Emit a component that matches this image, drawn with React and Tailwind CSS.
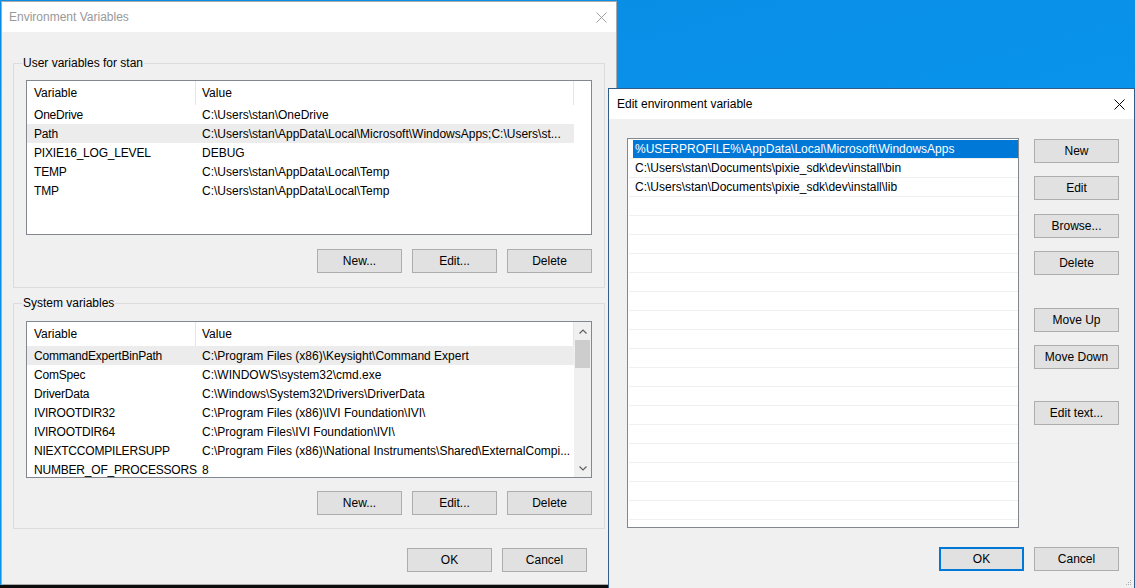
import React from 'react';

const userVars = [
  ['OneDrive', 'C:\\Users\\stan\\OneDrive'],
  ['Path', 'C:\\Users\\stan\\AppData\\Local\\Microsoft\\WindowsApps;C:\\Users\\st...'],
  ['PIXIE16_LOG_LEVEL', 'DEBUG'],
  ['TEMP', 'C:\\Users\\stan\\AppData\\Local\\Temp'],
  ['TMP', 'C:\\Users\\stan\\AppData\\Local\\Temp'],
];

const systemVars = [
  ['CommandExpertBinPath', 'C:\\Program Files (x86)\\Keysight\\Command Expert'],
  ['ComSpec', 'C:\\WINDOWS\\system32\\cmd.exe'],
  ['DriverData', 'C:\\Windows\\System32\\Drivers\\DriverData'],
  ['IVIROOTDIR32', 'C:\\Program Files (x86)\\IVI Foundation\\IVI\\'],
  ['IVIROOTDIR64', 'C:\\Program Files\\IVI Foundation\\IVI\\'],
  ['NIEXTCCOMPILERSUPP', 'C:\\Program Files (x86)\\National Instruments\\Shared\\ExternalCompi...'],
  ['NUMBER_OF_PROCESSORS', '8'],
];

const pathEntries = [
  '%USERPROFILE%\\AppData\\Local\\Microsoft\\WindowsApps',
  'C:\\Users\\stan\\Documents\\pixie_sdk\\dev\\install\\bin',
  'C:\\Users\\stan\\Documents\\pixie_sdk\\dev\\install\\lib',
];

function Btn({ children, primary }) {
  return (
    <div
      className={
        primary
          ? 'flex items-center justify-center h-[24px] w-[85px] bg-[#e1e1e1] border-2 border-[#0078d7] text-black'
          : 'flex items-center justify-center h-[24px] w-[85px] bg-[#e1e1e1] border border-[#adadad] text-black'
      }
    >
      {children}
    </div>
  );
}

function CloseX({ color }) {
  return (
    <svg width="11" height="11" viewBox="0 0 11 11">
      <path d="M0.5 0.5 L10.5 10.5 M10.5 0.5 L0.5 10.5" stroke={color} strokeWidth="1" fill="none" />
    </svg>
  );
}

function Chevron({ up }) {
  return (
    <svg width="8" height="5" viewBox="0 0 8 5">
      <path
        d={up ? 'M0.5 4.5 L4 1 L7.5 4.5' : 'M0.5 0.5 L4 4 L7.5 0.5'}
        stroke="#606060"
        strokeWidth="1.2"
        fill="none"
      />
    </svg>
  );
}

function VarList({ rows, height, scrollbar }) {
  return (
    <div className={`${height} w-[566px] border border-[#828790] bg-white flex overflow-hidden`}>
      <div className="w-[547px] flex flex-col">
        <div className="flex h-[24px] shrink-0">
          <div className="w-[169px] pl-[7px] flex items-center border-r border-[#e5e5e5]">Variable</div>
          <div className="w-[378px] pl-[6px] flex items-center border-r border-[#e5e5e5]">Value</div>
        </div>
        {rows.map(([name, value], i) => (
          <div key={name} className={`flex h-[19px] shrink-0 items-center ${i === (scrollbar ? 0 : 1) ? 'bg-[#ececec]' : ''}`}>
            <div className="w-[169px] pl-[7px] whitespace-nowrap tracking-[-0.2px]">{name}</div>
            <div className="w-[378px] pl-[6px] whitespace-nowrap overflow-hidden">{value}</div>
          </div>
        ))}
      </div>
      {scrollbar ? (
        <div className="w-[17px] bg-[#f0f0f0] flex flex-col">
          <div className="h-[18px] flex items-center justify-center">
            <Chevron up />
          </div>
          <div className="h-[28px] mx-[1px] bg-[#cdcdcd]" />
          <div className="flex-1" />
          <div className="h-[17px] flex items-center justify-center">
            <Chevron />
          </div>
        </div>
      ) : (
        <div className="w-[17px]" />
      )}
    </div>
  );
}

function GroupBox({ label, children, className }) {
  return (
    <div className={`relative w-[592px] border border-[#dcdcdc] px-[12px] ${className}`}>
      <span className="absolute left-[8px] -top-[9px] px-[1px] bg-[#f0f0f0] leading-[16px]">{label}</span>
      {children}
    </div>
  );
}

function ButtonRow({ className }) {
  return (
    <div className={`flex justify-end gap-[10px] ${className}`}>
      <Btn>New...</Btn>
      <Btn>Edit...</Btn>
      <Btn>Delete</Btn>
    </div>
  );
}

export default function App() {
  return (
    <div className="relative w-[1135px] h-[588px] overflow-hidden bg-[linear-gradient(165deg,#0a8be4_0%,#0995ec_55%,#0a8fe6_100%)] text-[12px] text-black font-['Segoe_UI','Liberation_Sans',Arial,sans-serif]">
      {/* window behind, peeking out at the bottom */}
      <div className="absolute left-0 top-[585px] w-[618px] h-[3px] bg-[#0c0c0c]" />

      {/* Environment Variables (inactive) */}
      <div className="absolute left-[1px] top-[1px] w-[616px] h-[584px] border border-[#aaaaaa] bg-[#f0f0f0] flex flex-col">
        <div className="h-[30px] bg-white flex items-center justify-between pl-[7px] pr-[9px] shrink-0">
          <span className="text-[#999999]">Environment Variables</span>
          <CloseX color="#a0a0a0" />
        </div>
        <div className="flex flex-col pl-[11px]">
          <GroupBox label="User variables for stan" className="mt-[31px] pt-[16px] pb-[14px]">
            <VarList rows={userVars} height="h-[155px]" />
            <ButtonRow className="mt-[14px]" />
          </GroupBox>
          <GroupBox label="System variables" className="mt-[15px] pt-[17px] pb-[13px]">
            <VarList rows={systemVars} height="h-[157px]" scrollbar />
            <ButtonRow className="mt-[13px]" />
          </GroupBox>
          <div className="flex justify-end gap-[10px] mt-[19px] mr-[29px]">
            <Btn>OK</Btn>
            <Btn>Cancel</Btn>
          </div>
        </div>
      </div>

      {/* Edit environment variable (active) */}
      <div className="absolute left-[608px] top-[88px] w-[527px] h-[500px] border border-b-0 border-[#2f5f88] bg-[#f0f0f0] flex flex-col">
        <div className="h-[30px] bg-white flex items-center justify-between pl-[8px] pr-[9px] shrink-0">
          <span>Edit environment variable</span>
          <CloseX color="#000000" />
        </div>
        <div className="flex pl-[18px] pt-[19px]">
          <div className="w-[392px] h-[390px] border border-[#828790] bg-white pt-[1px] pl-[1px] overflow-hidden flex flex-col">
            {Array.from({ length: 21 }).map((_, i) => (
              <div key={i} className="h-[19px] shrink-0 border-b border-[#f0f0f0] flex">
                {i === 0 ? (
                  <div className="ml-[4px] flex-1 bg-[#0078d7] text-white pl-[2px] flex items-center whitespace-nowrap">
                    {pathEntries[0]}
                  </div>
                ) : (
                  <div className="ml-[4px] pl-[2px] flex items-center whitespace-nowrap">{pathEntries[i] || ''}</div>
                )}
              </div>
            ))}
          </div>
          <div className="ml-[15px] flex flex-col pt-[1px]">
            <Btn>New</Btn>
            <div className="mt-[13px]"><Btn>Edit</Btn></div>
            <div className="mt-[14px]"><Btn>Browse...</Btn></div>
            <div className="mt-[13px]"><Btn>Delete</Btn></div>
            <div className="mt-[33px]"><Btn>Move Up</Btn></div>
            <div className="mt-[13px]"><Btn>Move Down</Btn></div>
            <div className="mt-[32px]"><Btn>Edit text...</Btn></div>
          </div>
        </div>
        <div className="flex justify-end gap-[10px] mt-[19px] pr-[15px]">
          <Btn primary>OK</Btn>
          <Btn>Cancel</Btn>
        </div>
        <svg className="absolute right-[2px] bottom-[2px]" width="7" height="7" viewBox="0 0 7 7">
          <rect x="5" y="1" width="1" height="1" fill="#b0b0b0" />
          <rect x="3" y="3" width="1" height="1" fill="#b0b0b0" />
          <rect x="5" y="3" width="1" height="1" fill="#b0b0b0" />
          <rect x="1" y="5" width="1" height="1" fill="#b0b0b0" />
          <rect x="3" y="5" width="1" height="1" fill="#b0b0b0" />
          <rect x="5" y="5" width="1" height="1" fill="#b0b0b0" />
        </svg>
      </div>
    </div>
  );
}
